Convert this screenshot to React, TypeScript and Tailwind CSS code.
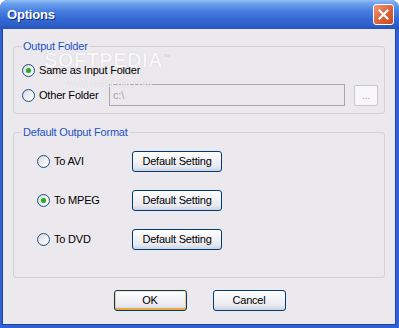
import React from 'react';

const FONT = "font-['Liberation_Sans',Arial,sans-serif]";

function Radio({ checked }: { checked?: boolean }) {
  return (
    <span className="flex h-[13px] w-[13px] shrink-0 items-center justify-center rounded-full border border-[#1C5180] bg-[linear-gradient(135deg,#D6D6DC_0%,#F1F1F3_55%,#FFFFFF_100%)]">
      {checked ? <span className="h-[5px] w-[5px] rounded-full bg-[#2BA62A] shadow-[0_0_1px_#8FE58A]" /> : null}
    </span>
  );
}

function XpButton({ label, width, focused }: { label: string; width: string; focused?: boolean }) {
  return (
    <button
      type="button"
      className={
        'flex h-[21px] items-center justify-center rounded-[3px] border border-[#003C74] bg-[linear-gradient(to_bottom,#FFFFFF_0%,#F5F5F8_35%,#E8EAF0_75%,#CED4E3_100%)] text-[11px] tracking-[-0.2px] text-black ' +
        width +
        (focused
          ? ' shadow-[inset_0_1px_0_#FFE8A6,inset_0_-2px_0_#EFA53A,inset_1px_0_0_#FBCF7A,inset_-1px_0_0_#FBCF7A]'
          : '')
      }
    >
      {label}
    </button>
  );
}

const formats = [
  { id: 'avi', label: 'To AVI', checked: false },
  { id: 'mpeg', label: 'To MPEG', checked: true },
  { id: 'dvd', label: 'To DVD', checked: false },
];

export default function App() {
  return (
    <div className={`${FONT} relative h-[328px] w-[399px] overflow-hidden rounded-t-[8px] bg-[#2F62D2]`}>
      {/* title bar */}
      <div className="flex h-[29px] items-center justify-between bg-[linear-gradient(to_bottom,#93BEF6_0%,#6FA2EE_12%,#4A83E2_35%,#3569D3_65%,#2C5CC7_90%,#2452B8_100%)] pl-[7px] pr-[5px]">
        <span className="text-[13px] font-bold tracking-[-0.2px] text-white [text-shadow:1px_1px_0_#102F86]">
          Options
        </span>
        <span className="flex h-[21px] w-[21px] items-center justify-center rounded-[3px] border border-white bg-[linear-gradient(135deg,#EE9A78_0%,#DE6A43_45%,#C9461F_100%)]">
          <svg width="11" height="11" viewBox="0 0 11 11">
            <path d="M1.5 1.5 L9.5 9.5 M9.5 1.5 L1.5 9.5" stroke="white" strokeWidth="2.2" strokeLinecap="square" />
          </svg>
        </span>
      </div>

      {/* client area */}
      <div className="ml-[2px] mr-[3px] h-[296px] border-x border-b border-[#1D45A8] bg-[#EBE9ED] pt-[17px] text-[11px] tracking-[-0.2px] text-black">
        <div className="relative ml-[10px] h-[68px] w-[372px] rounded-[3px] border border-[#D2D0D8] pl-[8px] pt-[17px]">
          <span className="absolute left-[8px] top-[-8px] bg-[#EBE9ED] px-[1px] leading-[14px] text-[#1F52C4]">
            Output Folder
          </span>
          <div className="flex h-[13px] items-center gap-[4px]">
            <Radio checked />
            <span className="leading-[13px]">Same as Input Folder</span>
          </div>
          <div className="mt-[7px] flex h-[22px] items-center">
            <div className="flex w-[87px] items-center gap-[4px]">
              <Radio />
              <span className="leading-[13px]">Other Folder</span>
            </div>
            <div className="flex h-[22px] w-[236px] items-center border border-[#A6A8AE] pl-[3px] text-[#A6A6A6]">
              c:\
            </div>
            <div className="ml-[9px] flex h-[21px] w-[24px] items-end justify-center rounded-[2px] border border-[#C6C6CC] bg-[#F8F8FA] pb-[4px] text-[10px] leading-[10px] text-[#A6A6A6]">
              ...
            </div>
          </div>
        </div>

        <div className="relative ml-[10px] mt-[18px] h-[146px] w-[372px] rounded-[3px] border border-[#D2D0D8] pl-[23px] pt-[18px]">
          <span className="absolute left-[8px] top-[-8px] bg-[#EBE9ED] px-[1px] leading-[14px] text-[#1F52C4]">
            Default Output Format
          </span>
          <div className="flex flex-col gap-[18px]">
            {formats.map((f) => (
              <div key={f.id} className="flex h-[21px] items-center">
                <div className="flex w-[95px] items-center gap-[4px]">
                  <Radio checked={f.checked} />
                  <span className="leading-[13px]">{f.label}</span>
                </div>
                <XpButton label="Default Setting" width="w-[90px]" />
              </div>
            ))}
          </div>
        </div>

        <div className="mt-[12px] flex justify-center gap-[26px] pl-[1px]">
          <XpButton label="OK" width="w-[73px]" focused />
          <XpButton label="Cancel" width="w-[73px]" />
        </div>
      </div>

      {/* softpedia watermark over the first group */}
      <span className="pointer-events-none absolute left-[44px] top-[56px] text-[20px] font-bold leading-[8px] tracking-[0.5px] text-[#F7F6F9] [text-shadow:0_0_1px_#BDBBC2]">
        SOFTPEDIA
      </span>
      <span className="pointer-events-none absolute left-[163px] top-[54px] text-[7px] leading-[6px] text-[#CFCDD3]">™</span>
      <span className="pointer-events-none absolute left-[66px] top-[80px] text-[10px] leading-[8px] text-[#F5F4F7] [text-shadow:0_0_1px_#C2C0C6]">
        www.softpedia.com
      </span>
    </div>
  );
}
